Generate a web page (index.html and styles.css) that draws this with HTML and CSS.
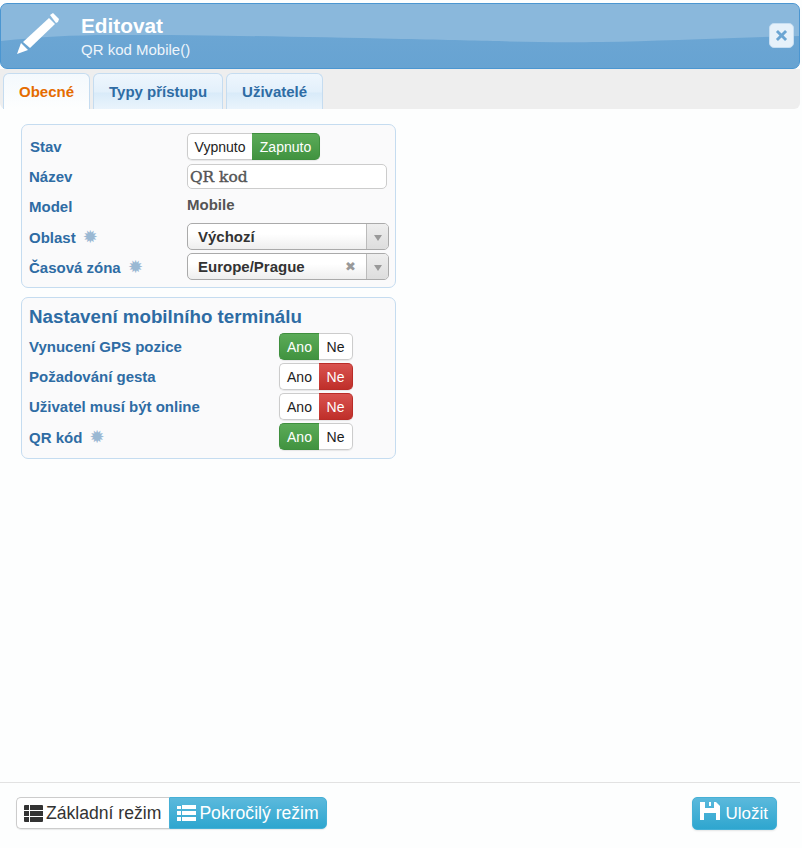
FILE: index.html
```html
<!DOCTYPE html>
<html lang="cs">
<head>
<meta charset="utf-8">
<title>Editovat</title>
<link rel="stylesheet" href="styles.css">
</head>
<body>
<div class="page">
  <header class="header">
    <svg class="wave" viewBox="0 0 798 64" preserveAspectRatio="none"><path d="M0 37C40 33 70 31 110 31 230 31 300 33 400 35S540 39 600 38 720 34 798 32V0H0Z" fill="#8ab8dc"/></svg>
    <svg class="pencil" viewBox="0 0 44 44"><path d="M1 42 5 31 12 38Z"/><path d="M7 30 33 6 39 12 14 36Z"/><path d="M34 3 37 1 43 7 42 10 40 11Z"/></svg>
    <div class="titles">
      <div class="title">Editovat</div>
      <div class="subtitle">QR kod Mobile()</div>
    </div>
    <button class="close" type="button"><svg viewBox="0 0 14 14"><path d="M3.2 1 7 4.800 10.800 1 13 3.200 9.200 7 13 10.800 10.800 13 7 9.200 3.200 13 1 10.800 4.800 7 1 3.200Z"/></svg></button>
  </header>

  <nav class="tabs">
    <a class="tab active">Obecné</a>
    <a class="tab">Typy přístupu</a>
    <a class="tab">Uživatelé</a>
  </nav>

  <main class="content">
    <section class="panel panel-main">
      <div class="row row-stav">
        <label class="label label-stav">Stav</label>
        <div class="toggle">
          <span class="opt opt-off">Vypnuto</span><span class="opt opt-on on-green">Zapnuto</span>
        </div>
      </div>
      <div class="row row-name">
        <label class="label">Název</label>
        <input class="text-input" type="text" value="QR kod">
      </div>
      <div class="row row-model">
        <label class="label">Model</label>
        <span class="value">Mobile</span>
      </div>
      <div class="row row-select">
        <label class="label">Oblast <span class="gear">✹</span></label>
        <div class="select"><span class="select-value">Výchozí</span><span class="arrow"><i></i></span></div>
      </div>
      <div class="row row-select">
        <label class="label">Časová zóna <span class="gear">✹</span></label>
        <div class="select"><span class="select-value">Europe/Prague</span><span class="clear">✖</span><span class="arrow"><i></i></span></div>
      </div>
    </section>

    <section class="panel panel-mobile">
      <h2 class="panel-title">Nastavení mobilního terminálu</h2>
      <div class="row row-yn">
        <label class="label">Vynucení GPS pozice</label>
        <div class="toggle yn"><span class="opt a on-green">Ano</span><span class="opt n">Ne</span></div>
      </div>
      <div class="row row-yn">
        <label class="label">Požadování gesta</label>
        <div class="toggle yn"><span class="opt a">Ano</span><span class="opt n on-red">Ne</span></div>
      </div>
      <div class="row row-yn">
        <label class="label">Uživatel musí být online</label>
        <div class="toggle yn"><span class="opt a">Ano</span><span class="opt n on-red">Ne</span></div>
      </div>
      <div class="row row-yn">
        <label class="label">QR kód <span class="gear">✹</span></label>
        <div class="toggle yn"><span class="opt a on-green">Ano</span><span class="opt n">Ne</span></div>
      </div>
    </section>
  </main>

  <footer class="footer">
    <div class="modes">
      <button class="mode" type="button"><svg class="ico" viewBox="0 0 19 17"><path d="M0 1Q0 0 1 0H5V5H0ZM6 0H18Q19 0 19 1V5H6ZM0 6H5V11H0ZM6 6H19V11H6ZM0 12H5V17H1Q0 17 0 16ZM6 12H19V16Q19 17 18 17H6Z"/></svg>Základní režim</button><button class="mode mode-on" type="button"><svg class="ico" viewBox="0 0 19 17"><path d="M0 1H4V4H0ZM5 0H19V4H5ZM0 6H4V10H0ZM5 6H19V10H5ZM0 12H4V16H0ZM5 12H19V16H5Z"/></svg>Pokročilý režim</button>
    </div>
    <button class="save" type="button"><svg class="floppy" viewBox="0 0 20 20"><path d="M0 1H16L20 5V19H0ZM5 1V7H14V1H11V5H9V1ZM4 12V19H16V12Z" fill-rule="evenodd"/></svg>Uložit</button>
  </footer>
</div>
</body>
</html>
```
FILE: styles.css
```css
* { box-sizing: border-box; }
html, body { margin: 0; padding: 0; }
body {
  background: #fdfefe;
  font-family: "Liberation Sans", Arial, sans-serif;
  color: #444;
  overflow: hidden;
}
.page {
  width: 800px;
  height: 848px;
  display: flex;
  flex-direction: column;
  padding-top: 3px;
}

/* header */
.header {
  position: relative;
  flex: 0 0 66px;
  display: flex;
  align-items: flex-start;
  background: linear-gradient(#6fa8d5, #67a3d2);
  border: 1px solid #4b96d1;
  border-radius: 7px;
  overflow: hidden;
  color: #fff;
}
.wave { position: absolute; left: 0; top: 0; width: 100%; height: 100%; }
.pencil {
  position: relative;
  flex: none;
  width: 44px;
  height: 44px;
  margin: 8px 0 0 15px;
  fill: #fff;
}
.titles { position: relative; margin-left: 21px; padding-top: 10px; }
.title { font-size: 20.8px; font-weight: 700; line-height: 23px; }
.subtitle { font-size: 15px; line-height: 18px; margin-top: 4px; color: #eef5fb; }
.close {
  position: absolute;
  right: 5px;
  top: 19px;
  width: 25px;
  height: 25px;
  padding: 5px;
  border: 1px solid #c6def2;
  border-radius: 5px;
  background: #e6f1fa;
}
.close svg { display: block; width: 13px; height: 13px; fill: #6ba5d3; }

/* tabs */
.tabs {
  flex: 0 0 40px;
  display: flex;
  gap: 3px;
  align-items: flex-end;
  padding-left: 3px;
  background: #eee;
  border-radius: 0 0 6px 6px;
}
.tab {
  height: 36px;
  padding: 0 15px;
  display: flex;
  align-items: center;
  font-size: 15px;
  font-weight: 700;
  color: #2e6ca4;
  background: linear-gradient(#eef6fd, #e3f0fb 50%, #d9ebf9 55%, #eaf4fc);
  border: 1px solid #c5dcf0;
  border-bottom: 0;
  border-radius: 6px 6px 0 0;
}
.tab.active {
  color: #e56c00;
  background: linear-gradient(#f4f9fd, #fdfefe);
}

/* content */
.content {
  flex: 1;
  padding: 15px 0 0 21px;
  display: flex;
  flex-direction: column;
  gap: 9px;
}
.panel {
  width: 375px;
  background: #fafafb;
  border: 1px solid #c5dcf0;
  border-radius: 7px;
}
.panel-main { height: 164px; padding: 8px 6px 0 7px; }
.panel-mobile { height: 162px; padding: 7px 7px 0 7px; }
.panel-title {
  margin: 0 0 4px;
  font-size: 18.75px;
  line-height: 24px;
  font-weight: 700;
  color: #2e6ca4;
}
.row { display: flex; align-items: center; }
.label {
  font-size: 15px;
  font-weight: 700;
  color: #2e6ca4;
}
.row-stav { height: 27px; margin-bottom: 4px; }
.row-name { height: 25px; margin-bottom: 5px; }
.row-model { height: 25px; margin-bottom: 4px; }
.row-select { height: 27px; margin-bottom: 3px; }
.row-stav .label, .row-name .label, .row-model .label, .row-select .label { width: 158px; flex: none; }
.label-stav { padding-left: 1px; }
.gear {
  color: #9ab8d3;
  font-size: 18px;
  line-height: 1;
  margin-left: 3px;
  font-weight: 400;
  font-family: "DejaVu Sans", sans-serif;
}

.toggle {
  display: inline-flex;
  height: 27px;
  border-radius: 5px;
  box-shadow: 0 1px 1px rgba(0,0,0,.08);
}
.opt {
  display: flex;
  align-items: center;
  justify-content: center;
  font-size: 14px;
  color: #222;
  background: #fff;
  border: 1px solid #ccc;
}
.opt:first-child { border-radius: 5px 0 0 5px; border-right: 0; }
.opt:last-child { border-radius: 0 5px 5px 0; border-left: 0; }
.opt-off { width: 65px; }
.opt-on { width: 68px; }
.on-green {
  color: #fff;
  background: linear-gradient(#5bab58, #419340);
  border-color: #3f8f3e;
}
.on-red {
  color: #fff;
  background: linear-gradient(#d9534f, #bf2f2a);
  border-color: #b92c28;
}
.text-input {
  width: 200px;
  height: 25px;
  padding: 0 2px;
  font-family: "DejaVu Serif", serif;
  font-size: 15.4px;
  font-weight: 400;
  -webkit-text-stroke: .4px #555;
  color: #555;
  background: #fff;
  border: 1px solid #ccc;
  border-radius: 5px;
  outline: none;
}
.value { font-size: 15px; font-weight: 700; color: #555; margin-top: -4px; }
.select {
  width: 203px;
  height: 27px;
  display: flex;
  align-items: center;
  background: linear-gradient(#fff 40%, #eee);
  border: 1px solid #aaa;
  border-radius: 5px;
  font-size: 15px;
  font-weight: 700;
  color: #333;
}
.select-value { flex: 1; padding-left: 10px; }
.clear { font-size: 13px; color: #999; margin-right: 10px; font-family: "DejaVu Sans", sans-serif; }
.arrow {
  width: 22px;
  height: 100%;
  display: flex;
  align-items: center;
  justify-content: center;
  background: linear-gradient(#eee, #ddd);
  border-left: 1px solid #bbb;
  border-radius: 0 4px 4px 0;
}
.arrow i {
  width: 0;
  height: 0;
  margin-top: 3px;
  border: 4px solid transparent;
  border-top: 6px solid #999;
  border-bottom: 0;
}
.row-yn { justify-content: space-between; height: 27px; margin-bottom: 3px; padding-right: 35px; }
.yn .a { width: 40px; }
.yn .n { width: 34px; }

/* footer */
.footer {
  flex: 0 0 66px;
  display: flex;
  align-items: flex-start;
  justify-content: space-between;
  padding: 14px 23px 0 16px;
  border-top: 1px solid #e2e2e2;
}
.modes { display: flex; }
.mode {
  height: 32px;
  display: flex;
  align-items: center;
  padding: 0 8px 0 7px;
  font-family: inherit;
  font-size: 17.6px;
  color: #333;
  background: #fff;
  border: 1px solid #ccc;
  border-right: 0;
  border-radius: 5px 0 0 5px;
  box-shadow: 0 1px 1px rgba(0,0,0,.08);
}
.mode-on {
  padding: 0 7px 0 7px;
  color: #fff;
  background: linear-gradient(#5bb9dc, #2ea6cf);
  border: 1px solid #46b0d6;
  border-radius: 0 5px 5px 0;
}
.ico { width: 19px; height: 17px; margin-right: 3px; fill: currentColor; }
.save {
  height: 33px;
  display: flex;
  align-items: center;
  padding: 0 8px 0 7px;
  font-family: inherit;
  font-size: 17px;
  color: #fff;
  background: linear-gradient(#5bb9dc, #2ea6cf);
  border: 1px solid #46b0d6;
  border-radius: 5px;
  box-shadow: 0 1px 2px rgba(0,0,0,.1);
}
.floppy { width: 20px; height: 20px; margin: -6px 5px 0 0; fill: #fff; }
```
